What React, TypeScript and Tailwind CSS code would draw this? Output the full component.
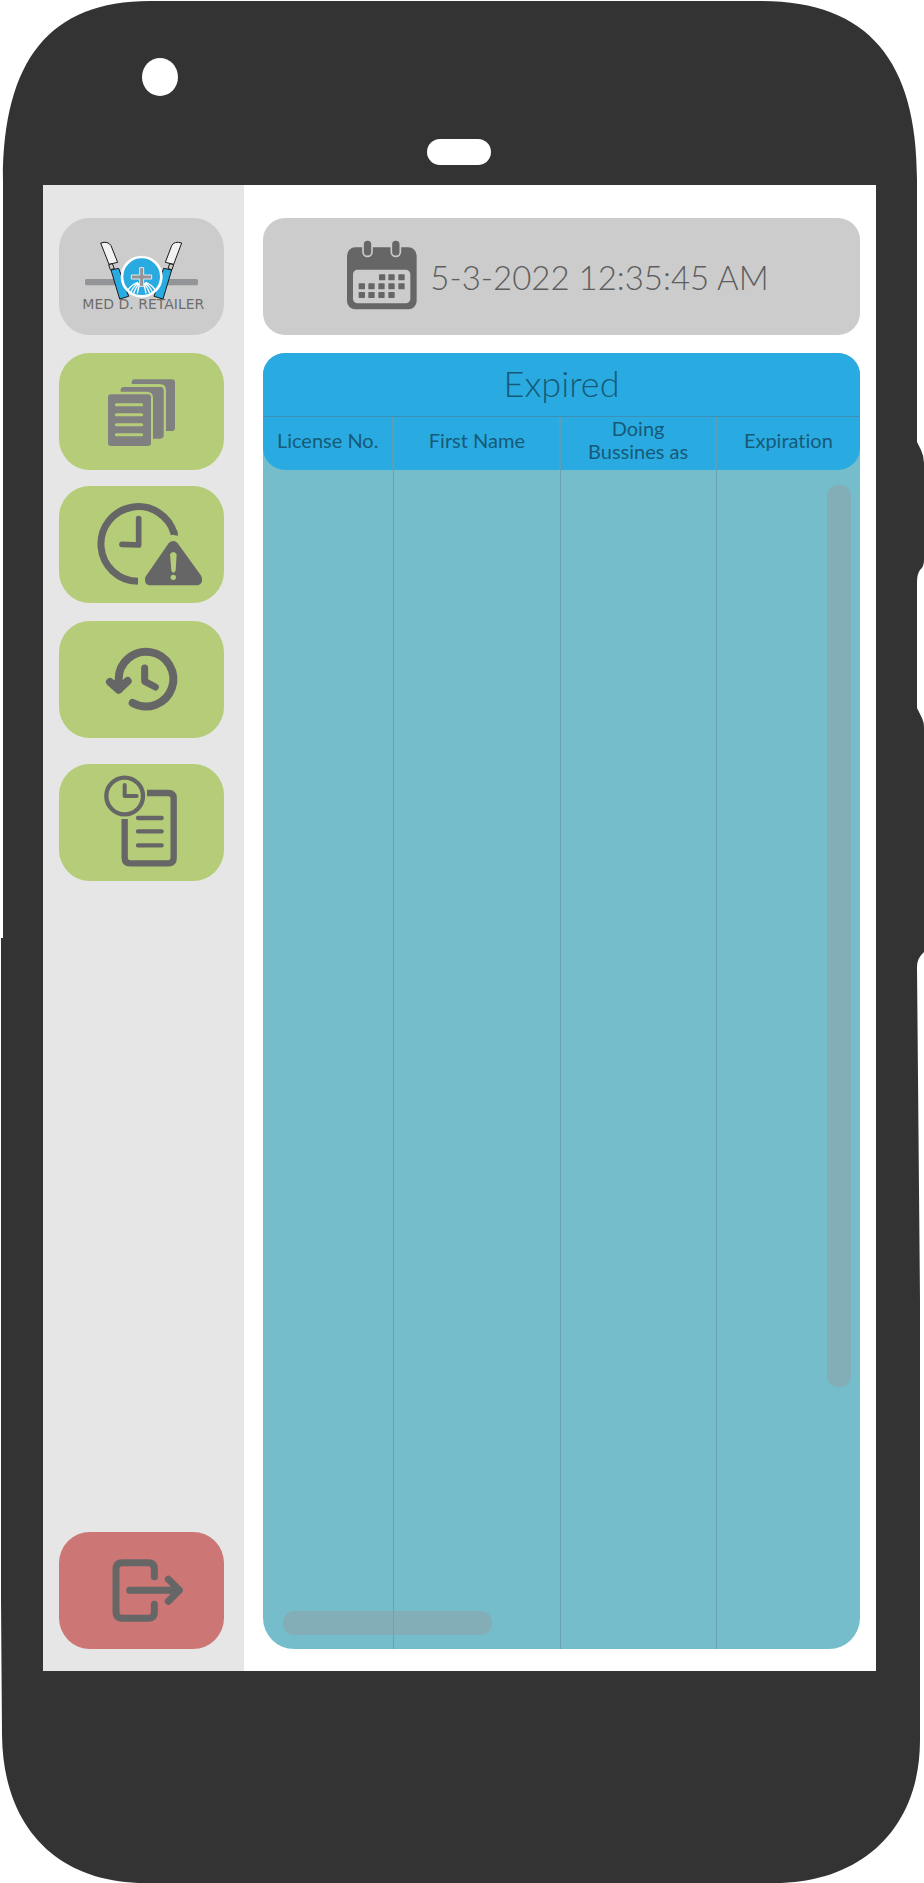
import type { ReactNode } from 'react';

function PhoneShell() {
  return (
    <svg
      aria-hidden="true"
      className="absolute inset-0 h-full w-full"
      viewBox="0 0 924 1883"
      preserveAspectRatio="none"
    >
      <path
        fill="#333333"
        d="M3 180C3 60 50 1 150 1H760C868 1 917 60 917 180V442L921 450Q924 456 924 463V560Q924 567 920 570Q917 574 917 582V708L922 718Q924 722 924 728V952Q917 958 917 967L920 1300V1740C920 1830 860 1883 775 1883H145C60 1883 3 1830 2 1735L1 1600V938H3Z"
      />
      <ellipse cx="160" cy="77" rx="18" ry="19" fill="#fff" />
      <rect x="427" y="139" width="64" height="26" rx="13" fill="#fff" />
    </svg>
  );
}

function Logo() {
  return (
    <svg className="h-full w-full" viewBox="57 54 495 351" role="img" aria-label="Med D. Retailer">
      <rect x="135" y="237" width="339" height="19" rx="5" fill="#929497" />
      <g stroke="#1a1a1a" strokeWidth="3" strokeLinejoin="round">
        <path fill="#f1f2f2" d="M182 129Q204 122 213 137L233 187L207 193Z" />
        <path fill="#cccccc" d="M206 194L217 191L223 206L211 209Z" />
        <path fill="#29abe2" d="M213 210L236 205L266 289L239 297Z" />
        <path fill="#f1f2f2" d="M425 129Q403 122 395 137L376 187L401 193Z" />
        <path fill="#cccccc" d="M401 194L389 191L384 206L396 209Z" />
        <path fill="#29abe2" d="M395 210L371 205L342 289L369 297Z" />
      </g>
      <circle cx="305" cy="230" r="59" fill="#29abe2" stroke="#fff" strokeWidth="8" />
      <g stroke="#fff" fill="none" strokeWidth="4">
        <path d="M294 247Q276 253 264 270M296 249Q280 258 273 277M298 250Q287 262 281 280M300 252Q294 264 292 280" />
        <path d="M316 247Q334 253 346 270M314 249Q330 258 337 277M312 250Q323 262 329 280M310 252Q316 264 318 280" />
      </g>
      <path
        fill="#929497"
        stroke="#e6e6e6"
        strokeWidth="3"
        d="M299 203H311V225H335V237H311V259H299V237H274V225H299Z"
      />
      <text
        x="310"
        y="327"
        textAnchor="middle"
        fill="#6d6d6d"
        fontSize="42"
        fontFamily="'DejaVu Sans', sans-serif"
      >
        MED D. RETAILER
      </text>
    </svg>
  );
}

function DocumentsIcon() {
  return (
    <svg className="h-full w-full" viewBox="57 39 495 351" aria-hidden="true">
      <g fill="#808080">
        <path d="M275 132V128Q275 118 285 118H395Q405 118 405 128V263Q405 273 395 273H378V151Q378 132 359 132Z" />
        <path d="M242 155V151Q242 141 252 141H361Q371 141 371 151V286Q371 296 361 296H339V174Q339 155 320 155Z" />
        <rect x="204" y="163" width="129" height="155" rx="9" />
      </g>
      <path
        d="M229 194H305M229 224H305M229 254H305M229 284H305"
        stroke="#b5cc78"
        strokeWidth="9"
        strokeLinecap="round"
      />
    </svg>
  );
}

function ClockAlertIcon() {
  return (
    <svg className="h-full w-full" viewBox="57 438 495 351" aria-hidden="true">
      <path fill="none" stroke="#666666" strokeWidth="21" d="M294 724A112 112 0 1 1 403 583" />
      <path fill="#666666" d="M388 570Q395 588 414 587L412 573L404 562Z" />
      <path
        fill="none"
        stroke="#666666"
        strokeWidth="17"
        strokeLinecap="round"
        strokeLinejoin="round"
        d="M296 536V615L246 613"
      />
      <path
        fill="#666666"
        d="M386 610Q400 596 413 610L484 708Q492 730 474 736H328Q311 733 316 711Z"
      />
      <path fill="#b5cc78" d="M390 643Q400 629 410 643L407 691Q400 706 394 691Z" />
      <circle cx="400" cy="712" r="8" fill="#b5cc78" />
    </svg>
  );
}

function HistoryIcon() {
  return (
    <svg className="h-full w-full" viewBox="57 33 495 351" aria-hidden="true">
      <g
        fill="none"
        stroke="#666666"
        strokeWidth="24"
        strokeLinecap="round"
        strokeLinejoin="round"
      >
        <path d="M278 279A82 82 0 1 0 236 208V238" />
        <path d="M210 216L236 239L263 213" />
        <path strokeWidth="21" d="M314 174V214L346 231" />
      </g>
      <path fill="#666666" d="M218 210H255L250 232L236 244L222 232Z" />
    </svg>
  );
}

function ReportClockIcon() {
  return (
    <svg className="h-full w-full" viewBox="57 462 495 351" aria-hidden="true">
      <g fill="none" stroke="#666666">
        <circle cx="254" cy="558" r="55" strokeWidth="13" />
        <path strokeWidth="12" strokeLinecap="round" strokeLinejoin="round" d="M254 525V558H290" />
        <path
          strokeWidth="19"
          d="M321 549H385Q401 549 401 565V744Q401 760 385 760H270Q254 760 254 744V627"
        />
        <path
          strokeWidth="13"
          strokeLinecap="round"
          d="M294 624H365M294 664H365M294 706H365"
        />
      </g>
    </svg>
  );
}

function LogoutIcon() {
  return (
    <svg className="h-full w-full" viewBox="57 66 495 351" aria-hidden="true">
      <g
        fill="none"
        stroke="#666666"
        strokeWidth="21"
        strokeLinecap="round"
        strokeLinejoin="round"
      >
        <path d="M343 200V176Q343 158 325 158H247Q228 158 228 177V306Q228 325 247 325H325Q343 325 343 307V283" />
        <path d="M269 241H416M385 208L418 241L385 274" />
      </g>
      <path fill="#666666" d="M393 216L418 241L393 266Z" />
    </svg>
  );
}

function CalendarIcon() {
  const dots = [
    [123, 132], [151, 132], [181, 132],
    [62, 159], [91, 159], [121, 159], [151, 159], [181, 159],
    [62, 185], [91, 185], [121, 185], [151, 185],
  ];
  return (
    <svg className="h-[70px] w-[72px] shrink-0" viewBox="24 29 216 210" aria-hidden="true">
      <rect x="27" y="51" width="209" height="186" rx="25" fill="#666666" />
      <rect x="45" y="118" width="172" height="101" rx="14" fill="#cccccc" />
      <g fill="#666666" stroke="#cccccc" strokeWidth="5">
        <rect x="75" y="29" width="27" height="49" rx="13" />
        <rect x="160" y="29" width="27" height="49" rx="13" />
      </g>
      {dots.map(([x, y]) => (
        <rect key={`${x}-${y}`} x={x} y={y} width="19" height="18" rx="2" fill="#666666" />
      ))}
    </svg>
  );
}

function NavButton({ label, className, children }: { label: string; className: string; children: ReactNode }) {
  return (
    <button
      type="button"
      aria-label={label}
      className={`h-[117px] w-full shrink-0 cursor-pointer rounded-[31px] ${className}`}
    >
      {children}
    </button>
  );
}

const columns = [
  { label: 'License No.', width: 'w-[22%]' },
  { label: 'First Name', width: 'w-[28%]' },
  { label: 'Doing Bussines as', width: 'w-[26%]' },
  { label: 'Expiration', width: 'w-[24%]' },
];

export default function App() {
  return (
    <div className="relative flex min-h-screen flex-col bg-white pt-[185px] pr-12 pb-[212px] pl-[43px] font-['Lato',sans-serif]">
      <PhoneShell />
      <div className="relative flex grow bg-white">
        <nav className="flex w-[201px] shrink-0 flex-col bg-[#e6e6e6] pt-[33px] pr-5 pb-[22px] pl-4">
          <div className="h-[117px] w-full shrink-0 rounded-[31px] bg-[#cccccc]">
            <Logo />
          </div>
          <NavButton label="Documents" className="mt-[18px] bg-[#b5cc78]">
            <DocumentsIcon />
          </NavButton>
          <NavButton label="Expired" className="mt-4 bg-[#b5cc78]">
            <ClockAlertIcon />
          </NavButton>
          <NavButton label="History" className="mt-[18px] bg-[#b5cc78]">
            <HistoryIcon />
          </NavButton>
          <NavButton label="Reports" className="mt-[26px] bg-[#b5cc78]">
            <ReportClockIcon />
          </NavButton>
          <NavButton label="Log out" className="mt-auto bg-[#cc7675]">
            <LogoutIcon />
          </NavButton>
        </nav>

        <main className="flex min-w-0 grow flex-col gap-[18px] pt-[33px] pr-4 pb-[22px] pl-[19px]">
          <header className="flex h-[117px] shrink-0 items-center justify-center gap-3 rounded-[22px] bg-[#cccccc] pr-2 pb-[3px]">
            <CalendarIcon />
            <time dateTime="2022-05-03T00:35:45" className="pt-1 text-[33px] leading-10 font-light whitespace-nowrap text-[#5e5e5e]">
              5-3-2022 12:35:45 AM
            </time>
          </header>

          <section className="relative grid grow overflow-hidden rounded-t-[22px] rounded-b-[31px] bg-[#76bdcc]">
            <table className="h-full w-full table-fixed border-separate border-spacing-0 text-[#175a78] [font-variant-ligatures:none]">
              <colgroup>
                {columns.map((c) => (
                  <col key={c.label} className={c.width} />
                ))}
              </colgroup>
              <thead>
                <tr className="h-16">
                  <th colSpan={4} className="h-16 border-b border-[#3d8fb5] bg-[#29abe2] p-0 pb-1 text-[36px] leading-10 font-light">
                    Expired
                  </th>
                </tr>
                <tr className="h-[53px]">
                  {columns.map((c) => (
                    <th
                      key={c.label}
                      scope="col"
                      className="h-[53px] border-r-2 border-[#5a9fb8] bg-[#29abe2] px-5 pt-0 pb-[7px] text-[20px] leading-[23px] font-normal first:rounded-bl-[22px] first:px-0 last:rounded-br-[22px] last:border-r-0"
                    >
                      {c.label}
                    </th>
                  ))}
                </tr>
              </thead>
              <tbody>
                <tr>
                  {columns.map((c) => (
                    <td key={c.label} className="border-r border-[#66a3ae] last:border-r-0" />
                  ))}
                </tr>
              </tbody>
            </table>
            <div className="absolute top-[132px] right-[9px] h-[69.6%] w-6 rounded-[11px] bg-[#999999]/40" />
            <div className="absolute bottom-[14px] left-5 h-6 w-[35%] rounded-[11px] bg-[#999999]/40" />
          </section>
        </main>
      </div>
    </div>
  );
}
